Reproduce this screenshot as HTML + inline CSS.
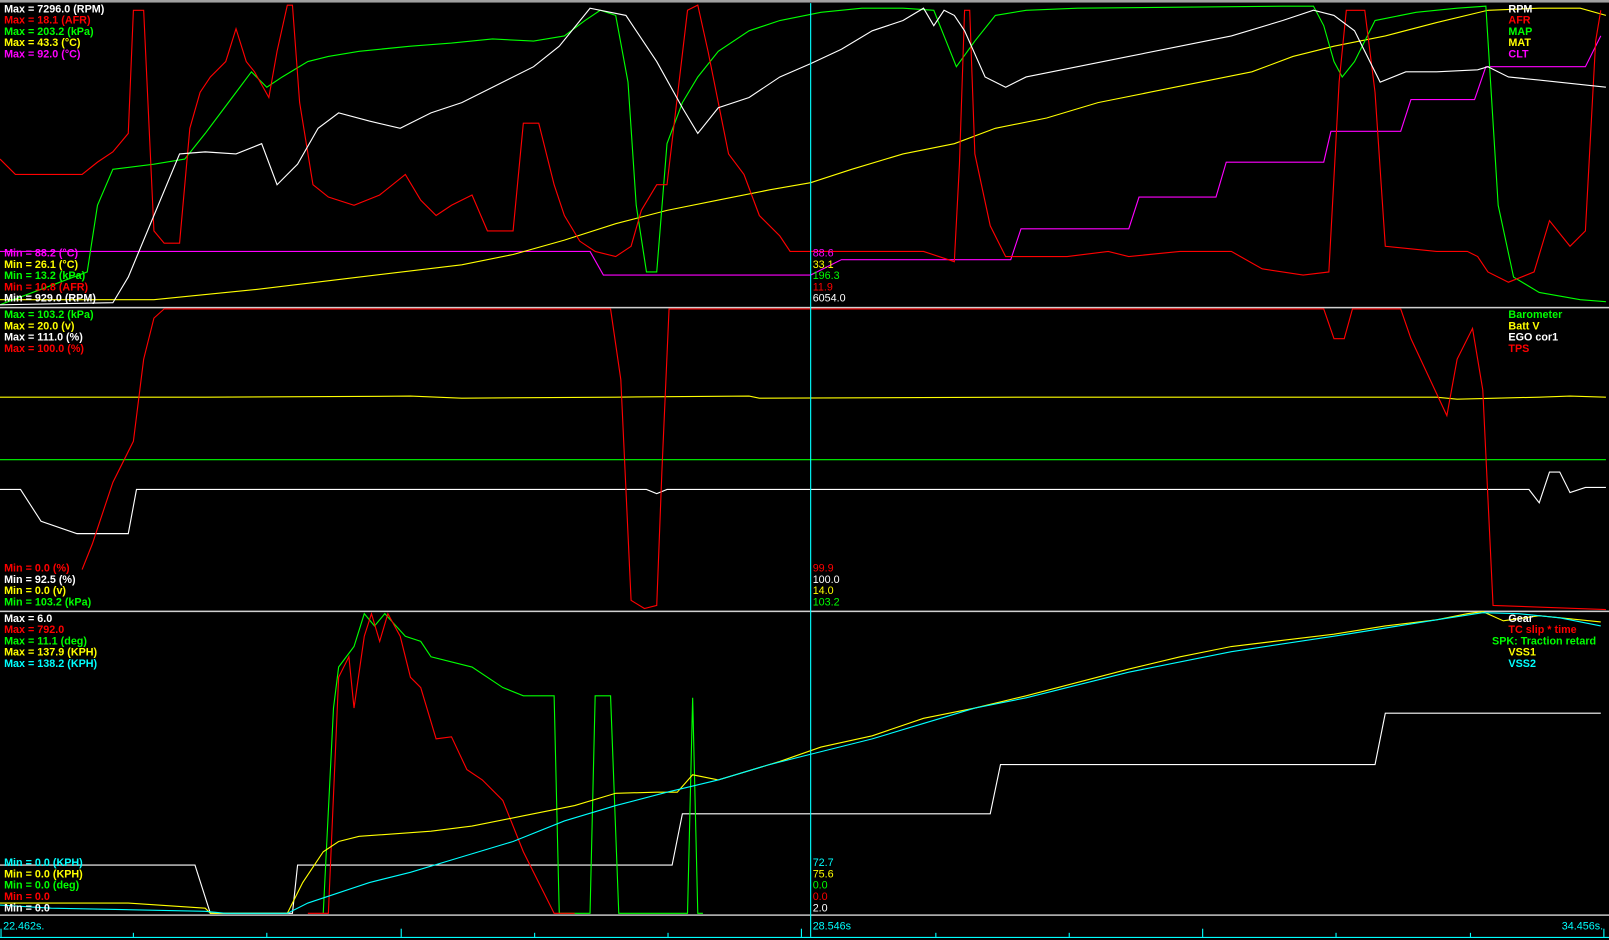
<!DOCTYPE html>
<html><head><meta charset="utf-8"><style>
html,body{margin:0;padding:0;background:#000;overflow:hidden}
svg{display:block}
text{font-family:"Liberation Sans",sans-serif;font-size:10.5px}
.b{font-weight:bold}
polyline{fill:none;stroke-width:1.1}
</style></head><body>
<svg width="1609" height="940" viewBox="0 0 1568 916" preserveAspectRatio="none">
<rect width="1568" height="916" fill="#000"/>
<rect x="0" y="0" width="1568" height="2.5" fill="#a0a0a0"/>
<!-- Panel 1 -->
<polyline stroke="#ff00ff" points="0,245 575,245 588,268 790,268 820,253 985,253 995,223 1100,223 1110,192 1185,192 1195,158 1290,158 1297,128 1365,128 1375,97 1437,97 1448,65 1545,65 1560,35"/>
<polyline stroke="#ffff00" points="0,292 150,292 250,282 350,270 450,258 500,248 550,234 600,218 650,205 700,195 750,185 790,178 830,165 880,150 930,140 970,125 1020,115 1070,100 1120,90 1170,80 1220,70 1260,55 1300,45 1350,35 1400,22 1450,10 1500,8 1540,8 1565,15"/>
<polyline stroke="#00ff00" points="0,297 85,265 95,200 110,165 150,160 180,155 200,130 215,110 230,90 245,70 260,85 275,75 300,60 320,55 350,50 400,45 440,42 480,38 520,40 550,35 570,20 585,10 600,15 612,80 620,200 630,265 640,265 650,140 665,100 680,75 700,50 730,30 760,20 800,12 840,8 880,8 910,10 920,35 932,65 950,40 970,15 1000,10 1050,8 1150,7 1250,6 1280,6 1290,25 1300,60 1308,75 1320,60 1340,20 1380,12 1420,8 1448,6 1460,200 1475,270 1500,285 1540,292 1565,294"/>
<polyline stroke="#ff0000" points="0,155 15,170 80,170 95,158 110,148 125,130 130,10 140,10 150,225 160,237 175,237 185,125 195,90 205,75 220,60 230,28 240,60 248,70 262,95 270,50 280,5 285,5 292,100 305,180 320,192 345,200 370,190 395,170 410,195 425,210 440,200 460,190 475,225 500,225 510,120 525,120 540,180 550,210 565,235 580,245 600,250 615,240 625,205 640,180 650,180 670,10 680,5 690,50 700,100 710,150 725,170 740,210 760,230 770,245 800,245 850,245 900,245 930,255 935,160 940,10 945,10 950,150 965,220 980,250 1000,250 1040,250 1080,245 1100,250 1150,245 1200,245 1230,262 1270,268 1295,265 1305,80 1312,10 1330,10 1340,90 1350,240 1400,245 1430,245 1440,250 1450,265 1470,275 1495,265 1510,215 1530,240 1545,225 1555,40 1560,10"/>
<polyline stroke="#ffffff" points="0,297 110,295 125,270 150,210 175,150 200,148 230,150 255,140 270,180 290,160 310,125 330,110 360,118 390,125 420,110 450,100 480,85 520,65 545,45 575,8 610,15 640,60 665,105 680,130 700,105 730,95 760,75 790,62 820,48 850,30 880,20 900,8 910,25 920,10 930,15 940,30 960,75 980,85 1000,75 1050,65 1100,55 1150,45 1200,35 1250,20 1280,10 1300,15 1320,30 1345,80 1370,70 1400,70 1440,68 1450,65 1470,75 1500,78 1565,85"/>
<rect x="0" y="299" width="1568" height="1.5" fill="#d0d0d0"/>
<!-- Panel 2 -->
<line x1="0" y1="448" x2="1565" y2="448" stroke="#00ff00" stroke-width="1.1"/>
<polyline stroke="#ffff00" points="0,387 200,387 400,386 450,388 600,387 730,386 740,388 1000,387 1200,387 1400,387 1420,389 1500,387 1530,386 1565,387"/>
<polyline stroke="#ffffff" points="0,477 20,477 40,508 75,520 125,520 133,477 630,477 640,481 650,477 1490,477 1500,490 1510,460 1520,460 1530,480 1545,475 1565,475"/>
<polyline stroke="#ff0000" points="80,555 90,530 110,470 130,430 140,350 150,310 160,301 595,301 605,370 615,585 628,593 640,590 645,460 652,301 1290,301 1300,330 1310,330 1318,301 1365,301 1375,330 1410,405 1420,350 1435,320 1445,380 1455,590 1565,594"/>
<rect x="0" y="595" width="1568" height="1.5" fill="#d0d0d0"/>
<!-- Panel 3 -->
<polyline stroke="#ffffff" points="0,843 190,843 205,890 285,890 290,843 655,843 665,793 965,793 975,745 1340,745 1350,695 1560,695"/>
<polyline stroke="#00ff00" points="315,890 325,690 330,650 345,630 355,598 365,610 375,598 395,620 410,625 420,640 460,650 490,670 510,678 540,678 545,890 575,890 580,678 595,678 603,890 670,890 675,680 680,890 685,890"/>
<polyline stroke="#ff0000" points="300,890 320,890 330,660 340,640 345,690 355,620 362,598 370,625 378,598 390,620 400,660 410,670 425,720 440,718 455,750 470,760 490,780 510,830 530,870 540,890 560,890"/>
<polyline stroke="#ffff00" points="0,880 125,880 200,885 205,890 280,890 295,860 315,830 330,820 350,815 420,810 460,805 510,795 560,785 600,773 640,772 660,772 675,755 700,760 760,742 800,728 850,717 900,700 950,690 1000,678 1050,665 1100,652 1150,640 1200,630 1250,624 1300,618 1350,610 1400,604 1430,598 1445,596 1465,605 1500,600 1530,603 1560,606"/>
<polyline stroke="#00ffff" points="0,882 50,885 200,888 220,890 280,890 300,880 330,870 360,860 400,850 450,835 500,820 550,800 600,785 650,772 700,760 750,745 790,735 850,720 900,705 950,690 1000,680 1100,655 1200,635 1300,620 1400,604 1445,597 1480,598 1520,602 1560,610"/>
<rect x="0" y="891" width="1568" height="1.5" fill="#c0c0c0"/>
<!-- cursor -->
<line x1="790" y1="3" x2="790" y2="913" stroke="#00ffff" stroke-width="1.1"/>
<!-- axis -->
<line x1="0" y1="913.5" x2="1568" y2="913.5" stroke="#00ffff" stroke-width="1.2"/>
<g stroke="#00ffff" stroke-width="1.1">
<line x1="1" y1="905" x2="1" y2="913"/><line x1="130" y1="909" x2="130" y2="913"/><line x1="260" y1="909" x2="260" y2="913"/><line x1="391" y1="905" x2="391" y2="913"/><line x1="521" y1="909" x2="521" y2="913"/><line x1="651" y1="909" x2="651" y2="913"/><line x1="781" y1="905" x2="781" y2="913"/><line x1="912" y1="909" x2="912" y2="913"/><line x1="1042" y1="909" x2="1042" y2="913"/><line x1="1172" y1="905" x2="1172" y2="913"/><line x1="1302" y1="909" x2="1302" y2="913"/><line x1="1433" y1="909" x2="1433" y2="913"/><line x1="1563" y1="905" x2="1563" y2="913"/>
</g>
<g fill="#00ffff"><text x="3" y="906">22.462s.</text><text x="792" y="906">28.546s</text><text x="1522" y="906">34.456s.</text></g>
<!-- labels panel1 -->
<g class="b">
<text x="4" y="12" fill="#fff" class="b">Max = 7296.0 (RPM)</text>
<text x="4" y="23" fill="#f00" class="b">Max = 18.1 (AFR)</text>
<text x="4" y="34" fill="#0f0" class="b">Max = 203.2 (kPa)</text>
<text x="4" y="45" fill="#ff0" class="b">Max = 43.3 (°C)</text>
<text x="4" y="56" fill="#f0f" class="b">Max = 92.0 (°C)</text>
<text x="4" y="250" fill="#f0f" class="b">Min = 88.2 (°C)</text>
<text x="4" y="261" fill="#ff0" class="b">Min = 26.1 (°C)</text>
<text x="4" y="272" fill="#0f0" class="b">Min = 13.2 (kPa)</text>
<text x="4" y="283" fill="#f00" class="b">Min = 10.8 (AFR)</text>
<text x="4" y="294" fill="#fff" class="b">Min = 929.0 (RPM)</text>
<text x="1470" y="12" fill="#fff" class="b">RPM</text>
<text x="1470" y="23" fill="#f00" class="b">AFR</text>
<text x="1470" y="34" fill="#0f0" class="b">MAP</text>
<text x="1470" y="45" fill="#ff0" class="b">MAT</text>
<text x="1470" y="56" fill="#f0f" class="b">CLT</text>
<text x="4" y="310" fill="#0f0" class="b">Max = 103.2 (kPa)</text>
<text x="4" y="321" fill="#ff0" class="b">Max = 20.0 (v)</text>
<text x="4" y="332" fill="#fff" class="b">Max = 111.0 (%)</text>
<text x="4" y="343" fill="#f00" class="b">Max = 100.0 (%)</text>
<text x="1470" y="310" fill="#0f0" class="b">Barometer</text>
<text x="1470" y="321" fill="#ff0" class="b">Batt V</text>
<text x="1470" y="332" fill="#fff" class="b">EGO cor1</text>
<text x="1470" y="343" fill="#f00" class="b">TPS</text>
<text x="4" y="557" fill="#f00" class="b">Min = 0.0 (%)</text>
<text x="4" y="568" fill="#fff" class="b">Min = 92.5 (%)</text>
<text x="4" y="579" fill="#ff0" class="b">Min = 0.0 (v)</text>
<text x="4" y="590" fill="#0f0" class="b">Min = 103.2 (kPa)</text>
<text x="4" y="606" fill="#fff" class="b">Max = 6.0</text>
<text x="4" y="617" fill="#f00" class="b">Max = 792.0</text>
<text x="4" y="628" fill="#0f0" class="b">Max = 11.1 (deg)</text>
<text x="4" y="639" fill="#ff0" class="b">Max = 137.9 (KPH)</text>
<text x="4" y="650" fill="#0ff" class="b">Max = 138.2 (KPH)</text>
<text x="1470" y="606" fill="#fff" class="b">Gear</text>
<text x="1470" y="617" fill="#f00" class="b">TC slip * time</text>
<text x="1454" y="628" fill="#0f0" class="b">SPK: Traction retard</text>
<text x="1470" y="639" fill="#ff0" class="b">VSS1</text>
<text x="1470" y="650" fill="#0ff" class="b">VSS2</text>
<text x="4" y="844" fill="#0ff" class="b">Min = 0.0 (KPH)</text>
<text x="4" y="855" fill="#ff0" class="b">Min = 0.0 (KPH)</text>
<text x="4" y="866" fill="#0f0" class="b">Min = 0.0 (deg)</text>
<text x="4" y="877" fill="#f00" class="b">Min = 0.0</text>
<text x="4" y="888" fill="#fff" class="b">Min = 0.0</text>
</g>
<!-- cursor values -->
<text x="792" y="250" fill="#f0f">88.6</text>
<text x="792" y="261" fill="#ff0">33.1</text>
<text x="792" y="272" fill="#0f0">196.3</text>
<text x="792" y="283" fill="#f00">11.9</text>
<text x="792" y="294" fill="#fff">6054.0</text>
<text x="792" y="557" fill="#f00">99.9</text>
<text x="792" y="568" fill="#fff">100.0</text>
<text x="792" y="579" fill="#ff0">14.0</text>
<text x="792" y="590" fill="#0f0">103.2</text>
<text x="792" y="844" fill="#0ff">72.7</text>
<text x="792" y="855" fill="#ff0">75.6</text>
<text x="792" y="866" fill="#0f0">0.0</text>
<text x="792" y="877" fill="#f00">0.0</text>
<text x="792" y="888" fill="#fff">2.0</text>
</svg>
</body></html>
